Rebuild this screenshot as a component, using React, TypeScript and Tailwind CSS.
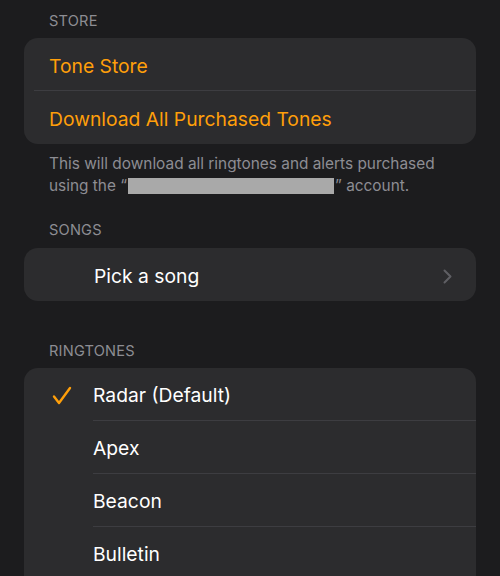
import React from 'react';

const font = { fontFamily: 'Inter, "Noto Sans", sans-serif' };

function SectionHeader({ title }: { title: string }) {
  return (
    <div className="px-[49px] text-[14.6px] leading-[18px] text-[#8d8d93] tracking-[0.2px]">
      {title}
    </div>
  );
}

function Chevron() {
  return (
    <svg width="9" height="15" viewBox="0 0 9 15" fill="none">
      <path d="M1.5 1.5L7.5 7.5L1.5 13.5" stroke="#5f5f64" strokeWidth="2" strokeLinecap="round" strokeLinejoin="round" />
    </svg>
  );
}

function Check() {
  return (
    <svg width="20" height="20" viewBox="0 0 20 20" fill="none">
      <path d="M2 10.5L7 17L18 2" stroke="#ff9f0a" strokeWidth="2.4" strokeLinecap="round" strokeLinejoin="round" />
    </svg>
  );
}

export default function App() {
  const ringtones = [
    { name: 'Radar (Default)', checked: true },
    { name: 'Apex', checked: false },
    { name: 'Beacon', checked: false },
    { name: 'Bulletin', checked: false },
  ];

  return (
    <div className="w-[500px] h-[576px] bg-[#1c1c1e] overflow-hidden pt-[12px]" style={font}>
      {/* Store */}
      <SectionHeader title="STORE" />
      <div className="mx-[24px] mt-[8px] bg-[#2c2c2e] rounded-[14px] overflow-hidden">
        <div className="h-[52px] flex items-center pt-[4px] pl-[25px] text-[19.3px] text-[#ff9f0a]">Tone Store</div>
        <div className="ml-[10px] h-px bg-[#3d3d41]" />
        <div className="h-[53px] flex items-center pt-[3px] pl-[25px] text-[19.3px] text-[#ff9f0a]">
          Download All Purchased Tones
        </div>
      </div>
      <div className="px-[49px] mt-[9px] text-[15.4px] leading-[22px] text-[#8d8d93]">
        This will download all ringtones and alerts purchased
        <br />
        using the “
        <span className="inline-block align-middle w-[206px] h-[16px] bg-[#a9a9a9] mx-[1px] -mt-[2px]" />
        ” account.
      </div>

      {/* Songs */}
      <div className="mt-[24px]">
        <SectionHeader title="SONGS" />
      </div>
      <div className="mx-[24px] mt-[9px] bg-[#2c2c2e] rounded-[14px] h-[53px] flex items-center justify-between pt-[3px] pl-[70px] pr-[24px]">
        <span className="text-[19.3px] text-white">Pick a song</span>
        <Chevron />
      </div>

      {/* Ringtones */}
      <div className="mt-[41px]">
        <SectionHeader title="RINGTONES" />
      </div>
      <div className="mx-[24px] mt-[8px] bg-[#2c2c2e] rounded-t-[14px]">
        {ringtones.map((r, i) => (
          <div key={r.name}>
            {i > 0 && <div className="ml-[69px] h-px bg-[#3d3d41]" />}
            <div className="h-[52px] flex items-center pt-[3px]">
              <div className="w-[69px] flex justify-center pl-[6px]">{r.checked && <Check />}</div>
              <span className="text-[19.3px] text-white">{r.name}</span>
            </div>
          </div>
        ))}
      </div>
    </div>
  );
}
